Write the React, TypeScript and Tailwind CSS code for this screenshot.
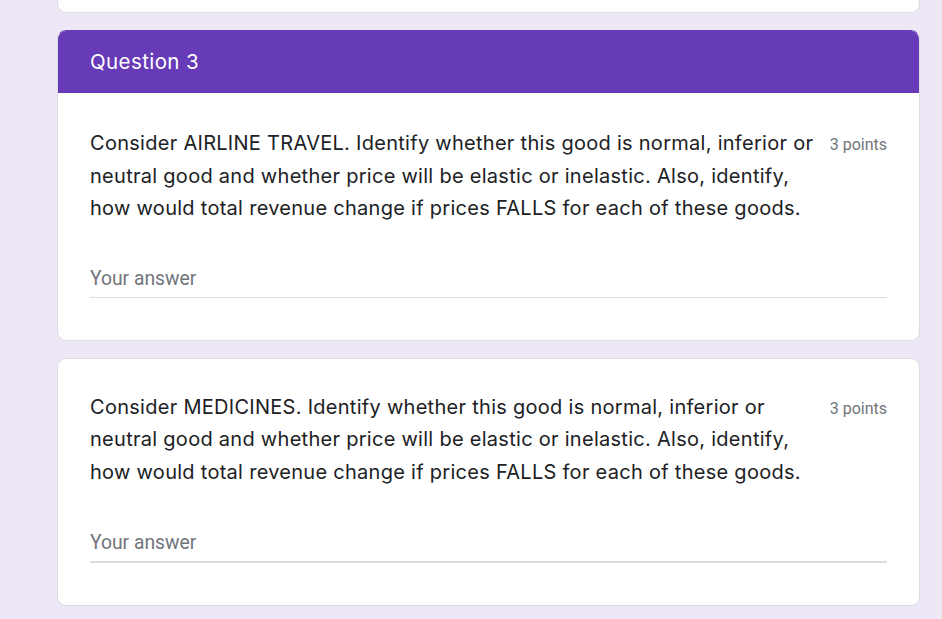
import React from 'react';

const questions = [
  {
    lines: [
      'Consider AIRLINE TRAVEL. Identify whether this good is normal, inferior or',
      'neutral good and whether price will be elastic or inelastic. Also, identify,',
      'how would total revenue change if prices FALLS for each of these goods.',
    ],
    header: 'Question 3',
    thick: false,
  },
  {
    lines: [
      'Consider MEDICINES. Identify whether this good is normal, inferior or',
      'neutral good and whether price will be elastic or inelastic. Also, identify,',
      'how would total revenue change if prices FALLS for each of these goods.',
    ],
    header: null,
    thick: true,
  },
];

const QuestionCard = ({ q }: { q: (typeof questions)[number] }) => (
  <div
    className={`bg-white border border-[#dadce0] rounded-[9px] overflow-hidden ${
      q.header ? 'border-t-[#673ab7]' : ''
    }`}
  >
    {q.header && (
      <div className="bg-[#673ab7] h-[62px] flex items-center px-[32px]">
        <span className="text-white text-[20.5px] font-['Inter',sans-serif] tracking-[0.4px]">
          {q.header}
        </span>
      </div>
    )}
    <div className={`px-[32px] pb-[42px] ${q.header ? 'pt-[34px]' : 'pt-[32px]'}`}>
      <div className="flex items-start justify-between">
        <div className="text-[#202124] text-[20px] leading-[32.5px] font-['Inter',sans-serif] tracking-[0.28px]">
          {q.lines.map((l) => (
            <span key={l} className="block whitespace-nowrap">
              {l}
            </span>
          ))}
        </div>
        <span className="mt-[2px] text-[#70757a] text-[16px] leading-[32px] font-['Roboto',sans-serif] whitespace-nowrap">
          3 points
        </span>
      </div>
      <div className={`h-[40px] flex flex-col justify-end ${q.thick ? 'mt-[35px]' : 'mt-[33px]'}`}>
        <span className="text-[#70757a] text-[19.3px] leading-[24px] font-['Roboto',sans-serif] pb-[6px]">
          Your answer
        </span>
        <div className={q.thick ? 'h-[2px] bg-[#dadce0]' : 'h-px bg-[#dadce0]'} />
      </div>
    </div>
  </div>
);

export default function App() {
  return (
    <div className="min-h-screen bg-[#ede7f6] pl-[57px] pr-[22px] overflow-hidden">
      <div className="flex flex-col gap-[17px]">
        <div className="bg-white border border-[#dadce0] border-t-0 rounded-b-[9px] h-[13px]" />
        {questions.map((q, i) => (
          <QuestionCard key={i} q={q} />
        ))}
      </div>
    </div>
  );
}
